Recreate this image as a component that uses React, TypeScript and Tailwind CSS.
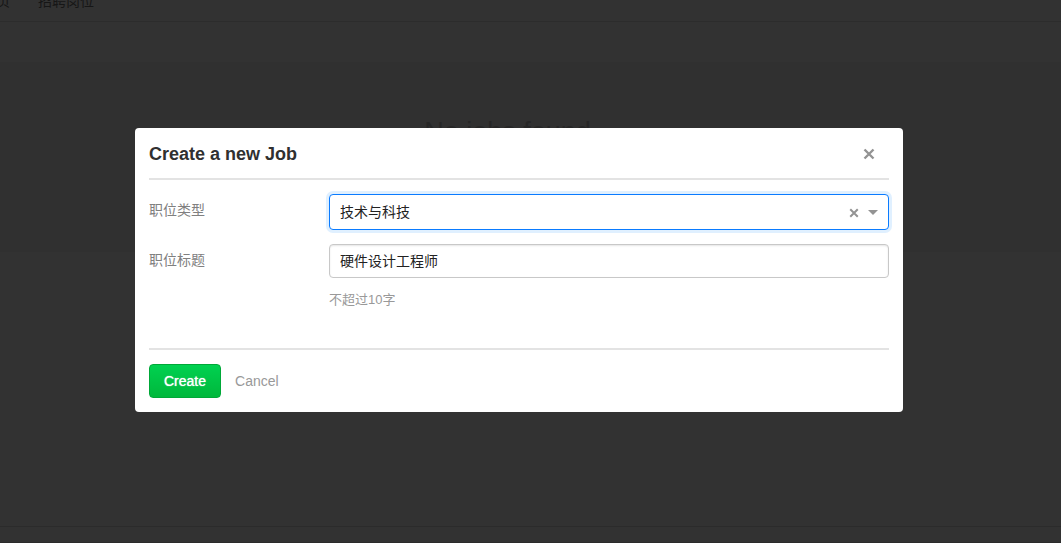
import { useState } from "react";

function Backdrop() {
  return (
    <div className="flex min-h-screen flex-col bg-[#323232]">
      <nav className="flex h-[22px] shrink-0 gap-7 overflow-hidden border-b border-[#2c2c2c] text-sm leading-4 text-[#161616]">
        <a href="#home" className="-mt-[7px] -ml-[18px]">首页</a>
        <a href="#jobs" className="-mt-[7px]">招聘岗位</a>
      </nav>
      <div className="h-10 shrink-0" />
      <section className="h-[190px] shrink-0 bg-[#303030] pt-[54px] pr-[46px] text-center">
        <h1 className="text-[27px] leading-8 text-[#262626]">No jobs found</h1>
      </section>
      <div className="grow" />
      <footer className="h-[17px] shrink-0 border-y border-[#2b2b2b]" />
    </div>
  );
}

function Cross({ className }: { className: string }) {
  return (
    <svg viewBox="0 0 12 12" className={className} aria-hidden="true">
      <path d="M1.5 1.5 10.5 10.5M10.5 1.5 1.5 10.5" fill="none" stroke="#939393" strokeWidth="2.4" />
    </svg>
  );
}

export default function App() {
  const [category, setCategory] = useState("tech");
  const [title, setTitle] = useState("硬件设计工程师");

  return (
    <div className="relative font-['Liberation_Sans','Noto_Sans_CJK_SC',sans-serif]">
      <Backdrop />
      <div className="absolute inset-0 pt-32 pr-[23px]">
        <form
          role="dialog"
          aria-labelledby="dialog-title"
          onSubmit={(e) => e.preventDefault()}
          className="mx-auto w-full max-w-3xl rounded bg-white p-3.5 text-sm"
        >
          <header className="flex items-start justify-between border-b-2 border-[#e3e3e3] pb-3">
            <h2 id="dialog-title" className="text-lg leading-6 font-bold text-[#303030]">Create a new Job</h2>
            <button type="button" aria-label="Close" className="flex h-6 w-10 items-center justify-center">
              <Cross className="size-3" />
            </button>
          </header>

          <div className="flex flex-col gap-3.5 pt-3.5">
            <div className="flex items-start">
              <label htmlFor="category" className="w-[180px] shrink-0 leading-8 text-[#808080]">职位类型</label>
              <div className="relative min-w-0 grow">
                <select
                  id="category"
                  value={category}
                  onChange={(e) => setCategory(e.target.value)}
                  className="block h-9 w-full appearance-none rounded border border-[#0a7bff] bg-white pr-14 pl-2.5 leading-5 text-[#222222] shadow-[0_0_0_3px_#e0f0ff] outline-none"
                >
                  <option value="">&nbsp;</option>
                  <option value="tech">技术与科技</option>
                </select>
                <button
                  type="button"
                  aria-label="Clear"
                  onClick={() => setCategory("")}
                  className="absolute top-2 right-6 flex size-[22px] items-center justify-center"
                >
                  <Cross className="size-[10px]" />
                </button>
                <svg viewBox="0 0 10 5" className="pointer-events-none absolute top-4 right-[11px] h-[5px] w-2.5" aria-hidden="true">
                  <path d="M0 0h10L5 5z" fill="#939393" />
                </svg>
              </div>
            </div>

            <div className="flex items-start">
              <label htmlFor="title" className="w-[180px] shrink-0 leading-8 text-[#808080]">职位标题</label>
              <div className="min-w-0 grow">
                <input
                  id="title"
                  type="text"
                  value={title}
                  onChange={(e) => setTitle(e.target.value)}
                  aria-describedby="title-hint"
                  className="block h-[34px] w-full rounded border border-[#c8c8c8] bg-white px-2.5 pb-0.5 leading-5 text-[#222222] shadow-[inset_0_1px_2px_#0000001a] outline-none"
                />
                <p id="title-hint" className="mt-3 text-[13px] leading-5 text-[#999999]">不超过10字</p>
              </div>
            </div>
          </div>

          <footer className="mt-[38px] flex items-center gap-3.5 border-t-2 border-[#e3e3e3] pt-3.5">
            <button
              type="submit"
              className="h-[34px] rounded border border-[#00a838] bg-linear-to-b from-[#00d150] to-[#00b83c] px-3.5 text-white [text-shadow:0_0_1px_#ffffff]"
            >
              Create
            </button>
            <button type="button" className="h-[34px] text-[#999999]">Cancel</button>
          </footer>
        </form>
      </div>
    </div>
  );
}
